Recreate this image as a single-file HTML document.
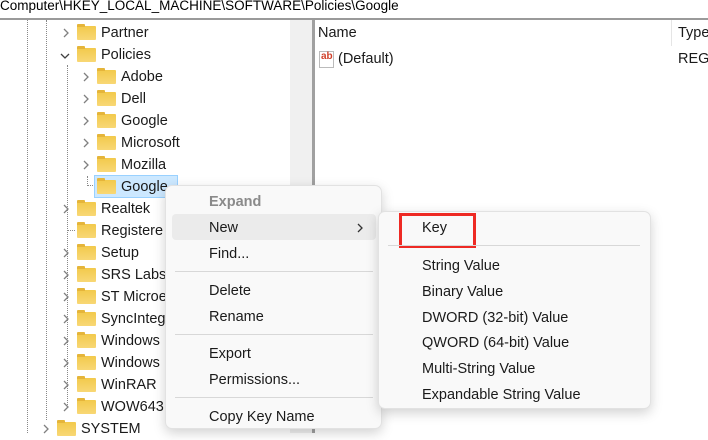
<!DOCTYPE html>
<html><head><style>
*{margin:0;padding:0;box-sizing:border-box}
body{width:708px;height:433px;overflow:hidden;background:#fff;font-family:"Liberation Sans",sans-serif;font-size:14px;color:#1a1a1a;position:relative}
.a{position:absolute;white-space:nowrap}
.addr{left:0;top:-2px;font-size:13.5px;color:#000}
.row{position:absolute;height:22px;line-height:22px;font-size:14.5px}
.fold{position:absolute;width:19px;height:14px;top:4px;background:linear-gradient(#f2c94c,#f8d775);border-radius:1px}
.fold:before{content:"";position:absolute;left:0;top:-2px;width:8px;height:3px;background:#e5b53a;border-radius:1px 1px 0 0}
.chev{position:absolute;top:6px;left:0;width:8px;height:10px}
.menu{position:absolute;background:#f9f9f9;border:1px solid #e2e2e2;border-radius:7px;box-shadow:0 4px 12px rgba(0,0,0,.18)}
.mi{position:absolute;font-size:14.5px;color:#1a1a1a}
.sep{position:absolute;height:1px;background:#d8d8d8}
</style></head><body>
<svg width="0" height="0" style="position:absolute"><defs>
<symbol id="r" viewBox="0 0 8 10"><path d="M2 1 L6 5 L2 9" fill="none" stroke="#808080" stroke-width="1.3"/></symbol>
<symbol id="d" viewBox="0 0 10 8"><path d="M1 2 L5 6 L9 2" fill="none" stroke="#404040" stroke-width="1.3"/></symbol>
</defs></svg>
<div class="a addr">Computer\HKEY_LOCAL_MACHINE\SOFTWARE\Policies\Google</div>
<div class="a" style="left:0;top:18px;width:708px;height:2px;background:#9a9a9a"></div>
<div class="a" style="left:290px;top:20px;width:22px;height:413px;background:#f0f0f0"></div>
<div class="a" style="left:312px;top:20px;width:3px;height:413px;background:#a0a0a0"></div>
<div class="a" style="left:27px;top:20px;height:413px;border-left:1px dotted #888"></div>
<div class="a" style="left:46px;top:20px;height:400px;border-left:1px dotted #888"></div>
<div class="a" style="left:67px;top:65px;height:340px;border-left:1px dotted #888"></div>
<div class="a" style="left:87px;top:176px;width:8px;height:10px;border-left:1px dotted #888;border-bottom:1px dotted #888"></div>
<div class="a" style="left:67px;top:230px;width:8px;border-top:1px dotted #888"></div>
<div class="row" style="left:62px;top:22px"><svg class="chev"><use href="#r"/></svg><span class="fold" style="left:15px"></span><span class="a" style="left:39px">Partner</span></div>
<div class="row" style="left:60px;top:44px"><svg class="chev" style="width:10px;height:8px;top:8px"><use href="#d"/></svg><span class="fold" style="left:17px"></span><span class="a" style="left:41px">Policies</span></div>
<div class="row" style="left:82px;top:66px"><svg class="chev"><use href="#r"/></svg><span class="fold" style="left:15px"></span><span class="a" style="left:39px">Adobe</span></div>
<div class="row" style="left:82px;top:88px"><svg class="chev"><use href="#r"/></svg><span class="fold" style="left:15px"></span><span class="a" style="left:39px">Dell</span></div>
<div class="row" style="left:82px;top:110px"><svg class="chev"><use href="#r"/></svg><span class="fold" style="left:15px"></span><span class="a" style="left:39px">Google</span></div>
<div class="row" style="left:82px;top:132px"><svg class="chev"><use href="#r"/></svg><span class="fold" style="left:15px"></span><span class="a" style="left:39px">Microsoft</span></div>
<div class="row" style="left:82px;top:154px"><svg class="chev"><use href="#r"/></svg><span class="fold" style="left:15px"></span><span class="a" style="left:39px">Mozilla</span></div>
<div class="a" style="left:94px;top:175px;width:84px;height:23px;background:#cce8ff;border:1px solid #99d1ff"></div>
<div class="row" style="left:82px;top:176px"><span class="fold" style="left:15px"></span><span class="a" style="left:39px">Google</span></div>
<div class="row" style="left:62px;top:198px"><svg class="chev"><use href="#r"/></svg><span class="fold" style="left:15px"></span><span class="a" style="left:39px">Realtek</span></div>
<div class="row" style="left:62px;top:220px"><span class="fold" style="left:15px"></span><span class="a" style="left:39px">Registere</span></div>
<div class="row" style="left:62px;top:242px"><svg class="chev"><use href="#r"/></svg><span class="fold" style="left:15px"></span><span class="a" style="left:39px">Setup</span></div>
<div class="row" style="left:62px;top:264px"><svg class="chev"><use href="#r"/></svg><span class="fold" style="left:15px"></span><span class="a" style="left:39px">SRS Labs</span></div>
<div class="row" style="left:62px;top:286px"><svg class="chev"><use href="#r"/></svg><span class="fold" style="left:15px"></span><span class="a" style="left:39px">ST Microe</span></div>
<div class="row" style="left:62px;top:308px"><svg class="chev"><use href="#r"/></svg><span class="fold" style="left:15px"></span><span class="a" style="left:39px">SyncInteg</span></div>
<div class="row" style="left:62px;top:330px"><svg class="chev"><use href="#r"/></svg><span class="fold" style="left:15px"></span><span class="a" style="left:39px">Windows</span></div>
<div class="row" style="left:62px;top:352px"><svg class="chev"><use href="#r"/></svg><span class="fold" style="left:15px"></span><span class="a" style="left:39px">Windows</span></div>
<div class="row" style="left:62px;top:374px"><svg class="chev"><use href="#r"/></svg><span class="fold" style="left:15px"></span><span class="a" style="left:39px">WinRAR</span></div>
<div class="row" style="left:62px;top:396px"><svg class="chev"><use href="#r"/></svg><span class="fold" style="left:15px"></span><span class="a" style="left:39px">WOW643</span></div>
<div class="row" style="left:42px;top:418px"><svg class="chev"><use href="#r"/></svg><span class="fold" style="left:15px"></span><span class="a" style="left:39px">SYSTEM</span></div>
<div class="a" style="left:318px;top:25px;font-size:14.5px">Name</div>
<div class="a" style="left:671px;top:20px;height:26px;border-left:1px solid #e5e5e5"></div>
<div class="a" style="left:678px;top:25px;font-size:14.5px">Type</div>
<div class="a" style="left:319px;top:51px;width:15px;height:17px;border:1px solid #bbb;background:#fff;font-size:10px;font-weight:bold;color:#d0402a;line-height:10px;padding-left:1px">ab</div>
<div class="a" style="left:338px;top:51px;font-size:14.5px">(Default)</div>
<div class="a" style="left:678px;top:51px;font-size:14.5px">REG_</div>
<div class="menu" style="left:165px;top:185px;width:217px;height:244px"></div>
<div class="a" style="left:172px;top:214px;width:204px;height:26px;background:#ebebeb;border-radius:4px"></div>
<div class="mi a" style="left:209px;top:194px;color:#8a8a8a;font-weight:bold">Expand</div>
<div class="mi a" style="left:209px;top:220px">New</div>
<svg class="a" style="left:356px;top:223px" width="8" height="10"><path d="M2 1 L6 5 L2 9" fill="none" stroke="#333" stroke-width="1.3"/></svg>
<div class="mi a" style="left:209px;top:246px">Find...</div>
<div class="sep" style="left:175px;top:271px;width:198px"></div>
<div class="mi a" style="left:209px;top:283px">Delete</div>
<div class="mi a" style="left:209px;top:309px">Rename</div>
<div class="sep" style="left:175px;top:334px;width:198px"></div>
<div class="mi a" style="left:209px;top:346px">Export</div>
<div class="mi a" style="left:209px;top:372px">Permissions...</div>
<div class="sep" style="left:175px;top:397px;width:198px"></div>
<div class="mi a" style="left:209px;top:409px">Copy Key Name</div>
<div class="menu" style="left:378px;top:211px;width:273px;height:198px"></div>
<div class="mi a" style="left:422px;top:220px">Key</div>
<div class="a" style="left:399px;top:213px;width:77px;height:35px;border:3px solid #ee2a24"></div>
<div class="sep" style="left:388px;top:245px;width:252px"></div>
<div class="mi a" style="left:422px;top:258px">String Value</div>
<div class="mi a" style="left:422px;top:284px">Binary Value</div>
<div class="mi a" style="left:422px;top:310px">DWORD (32-bit) Value</div>
<div class="mi a" style="left:422px;top:335px">QWORD (64-bit) Value</div>
<div class="mi a" style="left:422px;top:361px">Multi-String Value</div>
<div class="mi a" style="left:422px;top:387px">Expandable String Value</div>
</body></html>
